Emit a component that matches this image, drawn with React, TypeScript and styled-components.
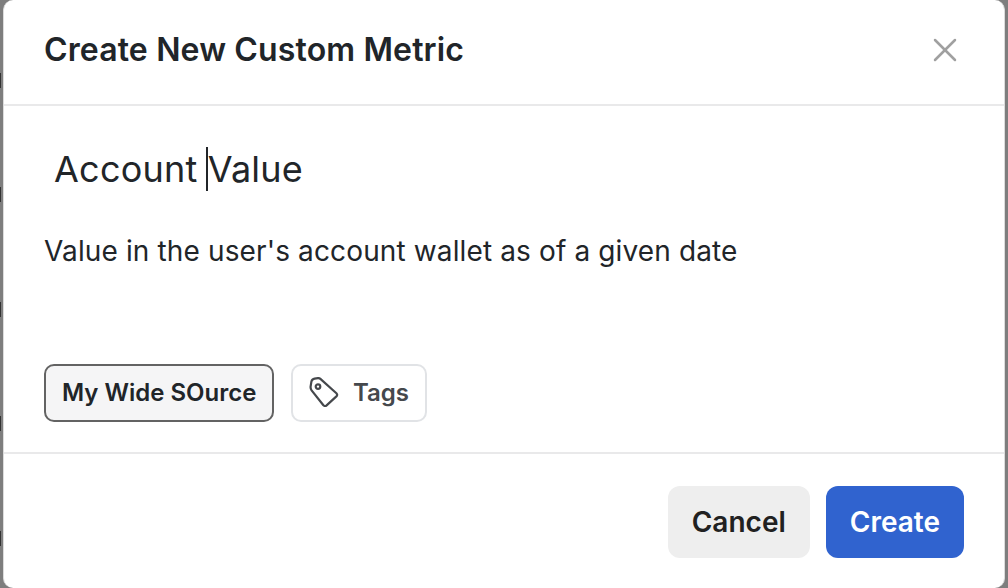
import React from 'react';
import styled, { createGlobalStyle } from 'styled-components';
import { X } from 'lucide-react';

const GlobalStyle = createGlobalStyle`
  html, body {
    margin: 0;
    padding: 0;
    background: #7e7e7e;
    font-family: Inter, "Liberation Sans", sans-serif;
  }
`;

// the dark ticks on the left edge are page content showing behind the modal
const Backdrop = styled.div`
  box-sizing: border-box;
  width: 1008px;
  height: 588px;
  padding: 0 3px;
  overflow: hidden;
  background-color: #7e7e7e;
  background-image: repeating-linear-gradient(
    to bottom,
    #7e7e7e 0,
    #7e7e7e 73px,
    #333333 73px,
    #333333 88px,
    #7e7e7e 88px,
    #7e7e7e 114.5px
  );
  background-size: 1px 100%;
  background-repeat: no-repeat;
`;

const Modal = styled.div`
  box-sizing: border-box;
  display: flex;
  flex-direction: column;
  height: 588px;
  background: #ffffff;
  border-style: solid;
  border-color: #dcdcdc;
  border-width: 0 1px;
  border-radius: 10px;
  color: #212529;
`;

const Header = styled.header`
  box-sizing: border-box;
  display: flex;
  align-items: center;
  justify-content: space-between;
  flex: none;
  height: 106px;
  padding: 0 39px 4px 40px;
  border-bottom: 2px solid #e9e9ea;
`;

const Title = styled.h1`
  margin: 0;
  font-size: 32px;
  font-weight: 600;
  line-height: 36px;
  letter-spacing: 0.14px;
  color: #212529;
`;

const CloseButton = styled.button`
  display: flex;
  padding: 0;
  border: 0;
  background: none;
  color: #a0a0a0;
`;

const Body = styled.main`
  box-sizing: border-box;
  display: flex;
  flex-direction: column;
  flex: none;
  height: 348px;
  padding: 40px 40px 0;
  border-bottom: 2px solid #e9e9ea;
`;

const NameField = styled.div`
  display: flex;
  align-items: center;
  height: 46px;
  padding-left: 10px;
  font-size: 36px;
  line-height: 46px;
  letter-spacing: 0.25px;
  color: #212529;
`;

const Caret = styled.span`
  width: 2px;
  height: 44px;
  margin: 0 0 0 8px;
  background: #212529;
`;

const Description = styled.p`
  margin: 39px 0 0;
  font-size: 28px;
  line-height: 40px;
  letter-spacing: 0.13px;
  color: #212529;
`;

const Chips = styled.div`
  display: flex;
  gap: 17px;
  margin-top: auto;
  margin-bottom: 30px;
`;

const Chip = styled.button<{ $active?: boolean }>`
  box-sizing: border-box;
  display: flex;
  align-items: center;
  gap: 13.5px;
  height: 58px;
  padding: 0 16px 2px 16px;
  border: 2px solid ${(p) => (p.$active ? '#636363' : '#e1e3e6')};
  border-radius: 10px;
  background: ${(p) => (p.$active ? '#f5f5f6' : '#ffffff')};
  color: ${(p) => (p.$active ? '#212529' : '#45484c')};
  font-family: inherit;
  font-size: 24px;
  font-weight: 600;
`;

const Footer = styled.footer`
  display: flex;
  justify-content: flex-end;
  gap: 16px;
  padding: 32px 40px 0 0;
`;

const Action = styled.button<{ $primary?: boolean }>`
  height: 72px;
  padding: 0 24px;
  border: 0;
  border-radius: 12px;
  background: ${(p) => (p.$primary ? '#3063cf' : '#eeeeee')};
  color: ${(p) => (p.$primary ? '#ffffff' : '#212121')};
  font-family: inherit;
  font-size: 28px;
  font-weight: 600;
`;

const TagIcon = () => (
  <svg width="30" height="30" viewBox="0 0 30 30" fill="none" stroke="currentColor" strokeWidth="2.2" strokeLinejoin="round">
    <path d="M1.6 9.6 L2.4 4.6 Q3 2 5.6 1.6 L9 1.1 Q10.4 1 11.4 1.9 L27.4 16.2 Q29 17.8 27.4 19.4 L17.6 28.4 Q16 29.8 14.4 28.2 L2.6 13.4 Q1.4 11.8 1.6 9.6 Z" />
    <circle cx="9" cy="9.6" r="2.3" />
  </svg>
);

export default function App() {
  return (
    <>
      <GlobalStyle />
      <Backdrop>
        <Modal>
          <Header>
            <Title>Create New Custom Metric</Title>
            <CloseButton aria-label="Close">
              <X size={40} strokeWidth={1.5} />
            </CloseButton>
          </Header>
          <Body>
            <NameField>
              Account
              <Caret />
              Value
            </NameField>
            <Description>Value in the user's account wallet as of a given date</Description>
            <Chips>
              <Chip $active>My Wide SOurce</Chip>
              <Chip>
                <TagIcon />
                Tags
              </Chip>
            </Chips>
          </Body>
          <Footer>
            <Action>Cancel</Action>
            <Action $primary>Create</Action>
          </Footer>
        </Modal>
      </Backdrop>
    </>
  );
}
